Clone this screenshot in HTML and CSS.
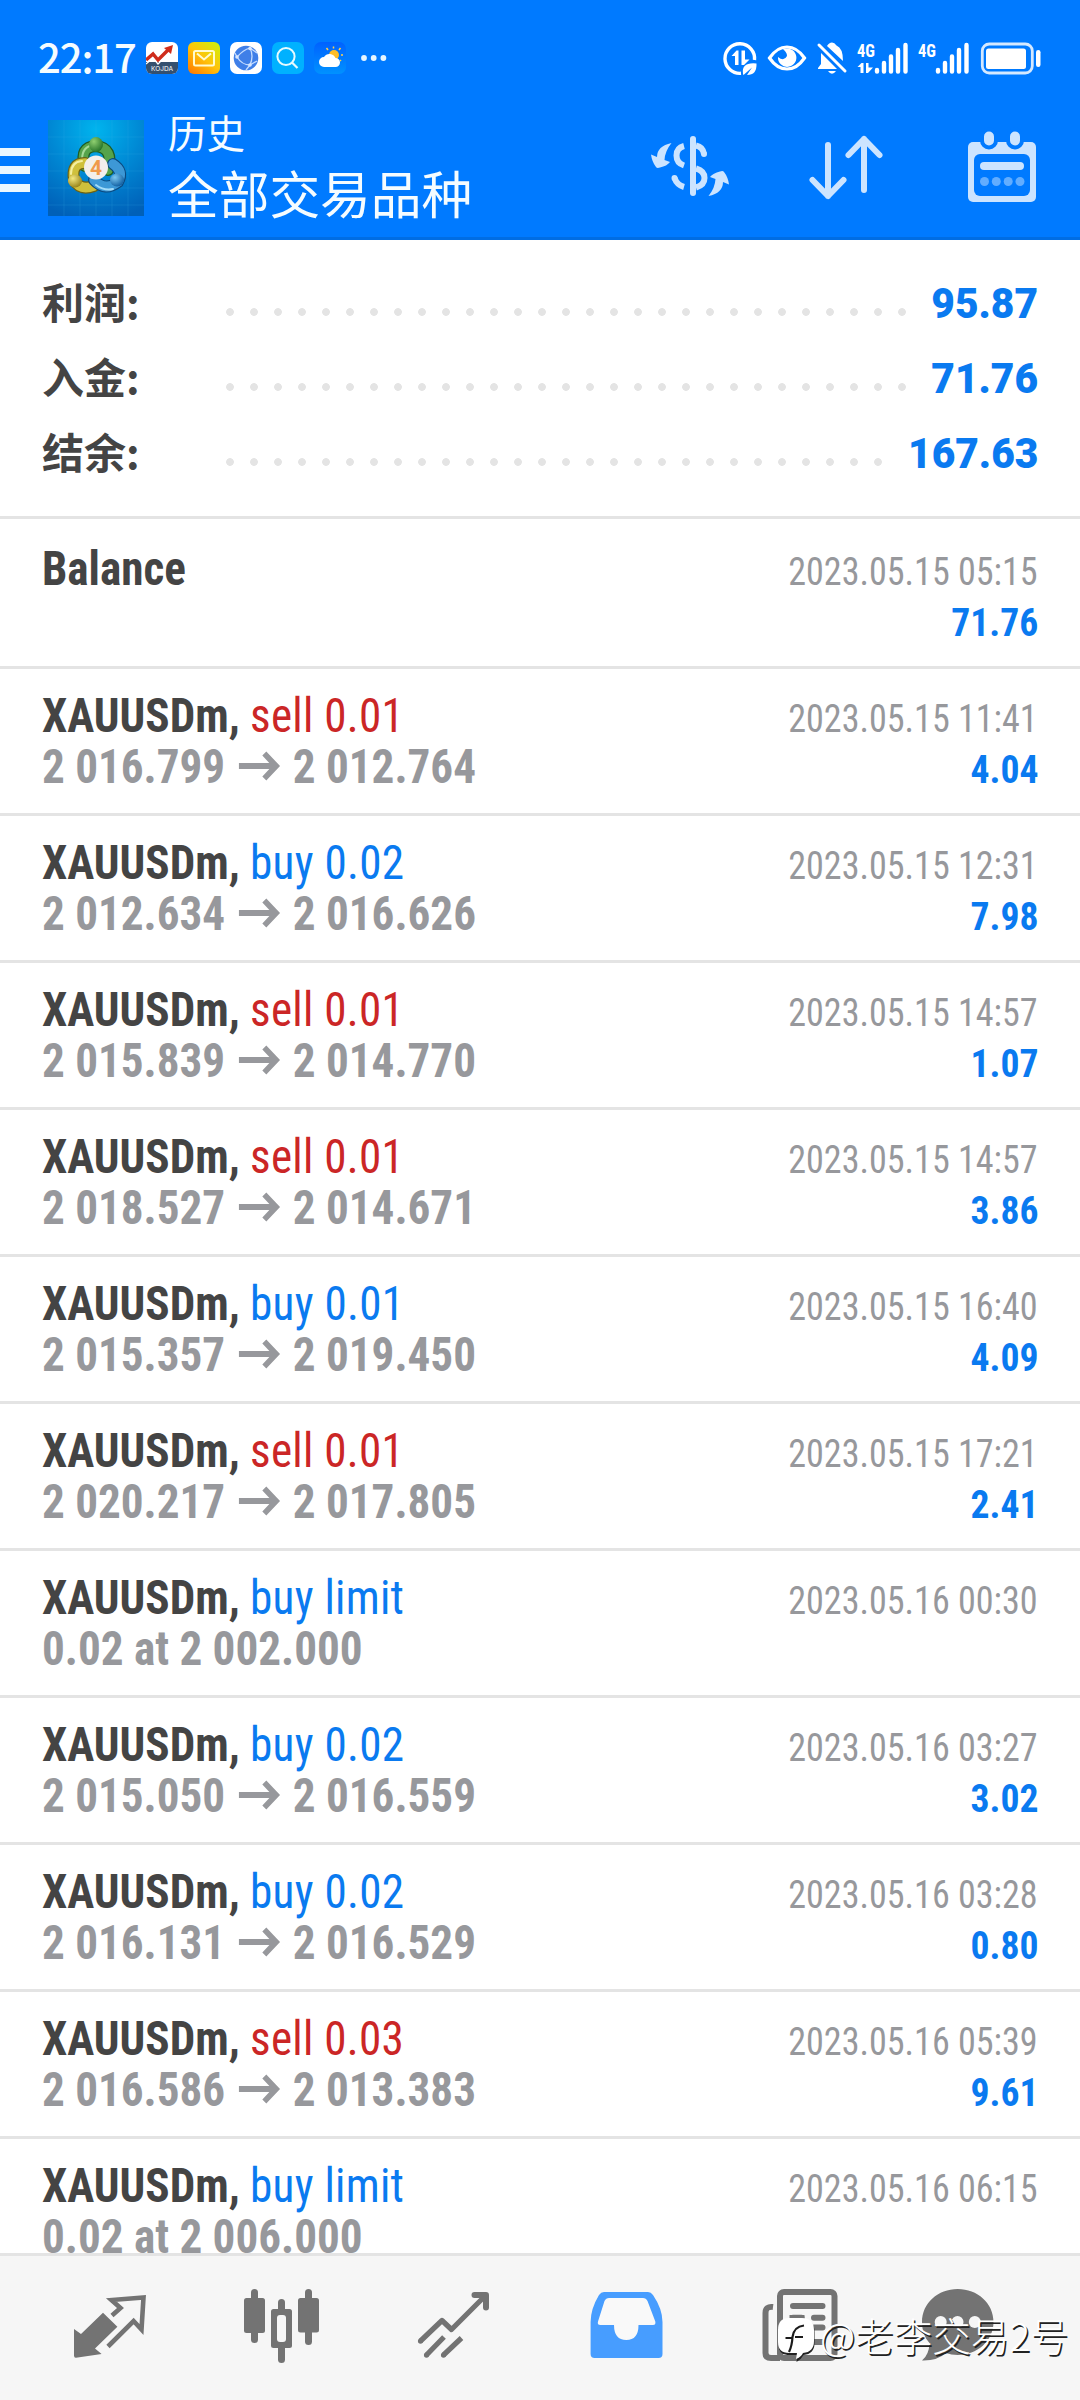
FILE: index.html
```
<!DOCTYPE html>
<html lang="zh-CN">
<head>
<meta charset="utf-8">
<title>历史</title>
<link rel="stylesheet" href="styles.css">
</head>
<body>
<div class="screen">
  <header class="header">
    <div class="status">
      <span class="clock">22:17</span>
      <div class="apps">
        <svg width="32" height="32" viewBox="0 0 32 32"><rect width="32" height="32" rx="6" fill="#fff"/><path d="M0 20H32V26a6 6 0 0 1-6 6H6a6 6 0 0 1-6-6Z" fill="#34506f"/><path d="M0 18L7 12L12 18L23 7" fill="none" stroke="#cf2c1b" stroke-width="3.5"/><path d="M18 6L27 3L25 12Z" fill="#cf2c1b"/><path d="M0 22L7 16L12 22L17 17" fill="none" stroke="#fff" stroke-width="1.2"/><text x="16" y="29" text-anchor="middle" font-size="6.5" fill="#fff" font-family="Inter">KOJDA</text></svg>
        <svg width="32" height="32" viewBox="0 0 32 32"><defs><linearGradient id="mail" x1="0.1" y1="1" x2="0.9" y2="0"><stop offset="0" stop-color="#ff7a00"/><stop offset=".5" stop-color="#ffc40a"/><stop offset="1" stop-color="#cdf00c"/></linearGradient></defs><rect width="32" height="32" rx="6" fill="url(#mail)"/><rect x="6" y="9" width="20" height="14.5" rx="1.5" fill="none" stroke="#fffbd0" stroke-width="2"/><path d="M9 11.5L16 17.5L23 11.5" fill="none" stroke="#fffbd0" stroke-width="2"/></svg>
        <svg width="32" height="32" viewBox="0 0 32 32"><rect width="32" height="32" rx="7" fill="#fff"/><circle cx="16" cy="16" r="12.3" fill="#3f7fe8"/><path d="M7 15Q13 8 20 6Q24 14 20 23Q12 23 7 15M20 6L27 11M20 23L27 19M7 15L5 11M20 23L16 28" fill="none" stroke="#c5dcff" stroke-width="1.3"/><circle cx="7" cy="15" r="1.8" fill="#d8e7ff"/><circle cx="20" cy="6.5" r="1.8" fill="#d8e7ff"/><circle cx="20" cy="23" r="1.8" fill="#d8e7ff"/></svg>
        <svg width="32" height="32" viewBox="0 0 32 32"><rect width="32" height="32" rx="7" fill="#00b1ff"/><circle cx="14" cy="14.5" r="8.6" fill="none" stroke="#e6faff" stroke-width="2"/><path d="M20 20.5L25.5 26" stroke="#e6faff" stroke-width="2.2"/></svg>
        <svg width="32" height="32" viewBox="0 0 32 32"><defs><linearGradient id="sky" x1="0" y1="0" x2="0" y2="1"><stop offset="0" stop-color="#0062ff"/><stop offset="1" stop-color="#0092ff"/></linearGradient></defs><rect width="32" height="32" rx="7" fill="url(#sky)"/><circle cx="20" cy="13" r="5" fill="#ffbd28"/><path d="M14 8L12.500 6M19.500 6.500V4.500M25 8L26.500 6M27 13H29M26 18L27 19" stroke="#ffcf4c" stroke-width="1.5"/><path d="M10 25a5 5 0 0 1 0-10a6.500 6.500 0 0 1 11.500 1a4.500 4.500 0 0 1 0 9Z" fill="#fff"/></svg>
        <svg class="more" width="26" height="32" viewBox="0 0 26 32" fill="#e6f6ff"><circle cx="3" cy="16" r="2.900"/><circle cx="12.700" cy="16" r="2.900"/><circle cx="22.400" cy="16" r="2.900"/></svg>
      </div>
      <svg class="indicators" width="330" height="40" viewBox="720 38 330 40" fill="#fff">
        <path d="M741 73.300A14.800 14.800 0 1 1 754.500 60" fill="none" stroke="#fff" stroke-width="3.400"/>
        <path d="M731.500 56L736.500 50.500H738.500V65H735V56ZM741.500 50.500H745V59.500H749.500L744 65H741.500Z"/>
        <path d="M743 74Q741 62 756.500 63.500Q757 75 747 75L752 67.500L743.500 75Z"/>
        <path d="M769.500 58Q777 47 787 47T804.500 58Q797 69 787 69T769.500 58Z" fill="none" stroke="#fff" stroke-width="3.200"/>
        <path d="M783 49.500A9.200 9.200 0 1 1 778 57Q784 62 787 56Q787 52 783 49.500Z"/>
        <path d="M821 53V64L818 68V69H837ZM827 46Q829 42.500 832 42.500Q834.500 42.500 836.500 45.500Q843 48 843 61ZM828 71H836Q832 76.500 828 71Z"/>
        <path d="M819 45L845 71" stroke="#fff" stroke-width="3" stroke-linecap="round"/>
        <text class="net" x="857" y="56.500" textLength="18" lengthAdjust="spacingAndGlyphs">4G</text>
        <text class="net" x="918" y="56.500" textLength="18" lengthAdjust="spacingAndGlyphs">4G</text>
        <path d="M857.500 67L861.500 63H863.500V73H860.500V67ZM866 63H868.500V67.500H873L868 73H866Z"/>
        <path d="M877 70V71.500M884 63V71.500M891 56.500V71.500M898 50V71.500M905.500 45V71.500M938 70V71.500M945 63V71.500M952 56.500V71.500M959 50V71.500M966.500 45V71.500" stroke="#fff" stroke-width="4.400" stroke-linecap="round"/>
        <rect x="982.300" y="44" width="50" height="29" rx="7" fill="none" stroke="#d5e9ff" stroke-width="2.800"/><rect x="986" y="48.500" width="40" height="20.500" rx="2.500"/><rect x="1036" y="50" width="4.500" height="17" rx="2.200"/>
      </svg>
    </div>
    <div class="toolbar">
      <svg class="menu" width="30" height="96" viewBox="0 0 30 96" fill="#ebf7ff"><path d="M0 28H30V36H0ZM0 46H30V54H0ZM0 64H30V72H0Z"/></svg>
      <svg class="logo" width="96" height="96" viewBox="0 0 96 96">
        <defs>
          <radialGradient id="lg" cx=".5" cy=".1" r=".95"><stop offset="0" stop-color="#00b4ee"/><stop offset=".5" stop-color="#0088d4"/><stop offset="1" stop-color="#0060b8"/></radialGradient>
          <radialGradient id="gy" cx=".35" cy=".3" r=".8"><stop offset="0" stop-color="#f3e880"/><stop offset="1" stop-color="#8f7a10"/></radialGradient>
          <radialGradient id="gg" cx=".35" cy=".3" r=".8"><stop offset="0" stop-color="#8fcf70"/><stop offset="1" stop-color="#1b6a22"/></radialGradient>
          <radialGradient id="gb" cx=".35" cy=".3" r=".8"><stop offset="0" stop-color="#7cc8f2"/><stop offset="1" stop-color="#07559a"/></radialGradient>
        </defs>
        <rect width="96" height="96" fill="url(#lg)"/>
        <path d="M16 0V96M32 0V96M48 0V96M64 0V96M80 0V96M0 17H96M0 34H96M0 51H96M0 68H96M0 85H96" stroke="#3fb4ec" stroke-opacity=".18"/>
        <g fill="none" stroke-linecap="round">
          <path d="M37 46Q31 27 48 26Q66 28 60 50" stroke="#1f5c24" stroke-width="12"/><path d="M37 46Q31 27 48 26Q66 28 60 50" stroke="#55a34b" stroke-width="9.500"/><path d="M34 40Q34 26 46 25" stroke="#a5d998" stroke-width="2"/>
          <path d="M37 43Q23 43 26 60Q32 71 46 66" stroke="#6d6213" stroke-width="12"/><path d="M37 43Q23 43 26 60Q32 71 46 66" stroke="#cfc03c" stroke-width="9.500"/><path d="M23 54Q23 42 34 41" stroke="#f5efa0" stroke-width="2"/>
          <path d="M65 44Q76 51 70 62Q57 72 46 60" stroke="#0b4a80" stroke-width="12"/><path d="M65 44Q76 51 70 62Q57 72 46 60" stroke="#3d98d6" stroke-width="9.500"/><path d="M48 65Q56 71 65 69" stroke="#a5dcf8" stroke-width="2"/>
        </g>
        <ellipse cx="48" cy="24.500" rx="7" ry="7.500" fill="url(#gg)"/><ellipse cx="27" cy="61" rx="7" ry="6.500" fill="url(#gy)"/><ellipse cx="69" cy="60" rx="7" ry="6.500" fill="url(#gb)"/>
        <circle cx="48" cy="47.500" r="12" fill="#f3efec"/>
        <text x="48" y="55" text-anchor="middle" font-size="21" font-weight="700" font-family="Roboto" fill="#f09a4c">4</text>
      </svg>
      <div class="titles"><div class="section">历史</div><div class="symbols">全部交易品种</div></div>
      <div class="actions">
        <svg width="96" height="96" viewBox="642 120 96 96" fill="none" stroke="#cce4ff" stroke-width="6">
          <path d="M693 139V193" stroke-linecap="round"/>
          <path d="M684 146Q676.500 148 676.500 155.500T684 165.500M674.500 178Q677 185 684 187"/>
          <path d="M674.500 178V178.100M704 154V154.100" stroke-linecap="round"/>
          <path d="M696 145.500Q703 147 704 154M696 168.500Q704.500 171 704.500 178Q704.500 185 696 187.500"/>
          <g fill="#cce4ff" stroke="none"><path id="turn" d="M671.500 143Q657 146 657 157L651 154.500Q652 162 656 167Q657 168.500 660 167.500Q667 166 670 162L664.500 160Q665 151 671.500 143Z"/><use href="#turn" transform="rotate(180 690 169.500)"/></g>
        </svg>
        <svg width="96" height="96" viewBox="798 120 96 96" fill="none" stroke="#cce4ff" stroke-width="6" stroke-linecap="round" stroke-linejoin="round"><path d="M828 145V196M812.500 180L828 196L843.500 180M864 190V139M848.500 155L864 139L879.500 155"/></svg>
        <svg width="96" height="96" viewBox="954 120 96 96" fill="#cce4ff"><rect x="968" y="142" width="68" height="60" rx="5"/><rect x="974" y="154" width="56" height="42" rx="6" fill="#007aff"/><g stroke="#007aff" stroke-width="4"><rect x="982" y="129.500" width="14" height="18" rx="7"/><rect x="1008" y="129.500" width="14" height="18" rx="7"/></g><rect x="980" y="162" width="44" height="8" rx="4"/><g fill="#62adff"><circle cx="984.500" cy="181.500" r="4.500"/><circle cx="996.300" cy="181.500" r="4.500"/><circle cx="1008.200" cy="181.500" r="4.500"/><circle cx="1020" cy="181.500" r="4.500"/></g></svg>
      </div>
    </div>
  </header>

  <section class="summary">
    <div class="sum"><span class="label">利润:</span><i class="dots"></i><b>95.87</b></div>
    <div class="sum"><span class="label">入金:</span><i class="dots"></i><b>71.76</b></div>
    <div class="sum"><span class="label">结余:</span><i class="dots"></i><b>167.63</b></div>
  </section>

  <svg class="defs" width="0" height="0"><symbol id="arrow" viewBox="0 0 44 34"><path d="M0 19H39M27 6.500L39.500 19L27 31.500" fill="none" stroke="#97989c" stroke-width="6"/></symbol></svg>

  <main class="list">
    <div class="row first"><div class="line"><span class="name">Balance</span><time>2023.05.15 05:15</time></div><div class="line"><span class="price">&nbsp;</span><span class="profit">71.76</span></div></div>
    <div class="row"><div class="line"><span class="name">XAUUSDm, <em class="sell">sell 0.01</em></span><time>2023.05.15 11:41</time></div><div class="line"><span class="price">2 016.799<svg class="to"><use href="#arrow"/></svg>2 012.764</span><span class="profit">4.04</span></div></div>
    <div class="row"><div class="line"><span class="name">XAUUSDm, <em class="buy">buy 0.02</em></span><time>2023.05.15 12:31</time></div><div class="line"><span class="price">2 012.634<svg class="to"><use href="#arrow"/></svg>2 016.626</span><span class="profit">7.98</span></div></div>
    <div class="row"><div class="line"><span class="name">XAUUSDm, <em class="sell">sell 0.01</em></span><time>2023.05.15 14:57</time></div><div class="line"><span class="price">2 015.839<svg class="to"><use href="#arrow"/></svg>2 014.770</span><span class="profit">1.07</span></div></div>
    <div class="row"><div class="line"><span class="name">XAUUSDm, <em class="sell">sell 0.01</em></span><time>2023.05.15 14:57</time></div><div class="line"><span class="price">2 018.527<svg class="to"><use href="#arrow"/></svg>2 014.671</span><span class="profit">3.86</span></div></div>
    <div class="row"><div class="line"><span class="name">XAUUSDm, <em class="buy">buy 0.01</em></span><time>2023.05.15 16:40</time></div><div class="line"><span class="price">2 015.357<svg class="to"><use href="#arrow"/></svg>2 019.450</span><span class="profit">4.09</span></div></div>
    <div class="row"><div class="line"><span class="name">XAUUSDm, <em class="sell">sell 0.01</em></span><time>2023.05.15 17:21</time></div><div class="line"><span class="price">2 020.217<svg class="to"><use href="#arrow"/></svg>2 017.805</span><span class="profit">2.41</span></div></div>
    <div class="row"><div class="line"><span class="name">XAUUSDm, <em class="buy">buy limit</em></span><time>2023.05.16 00:30</time></div><div class="line"><span class="price">0.02 at 2 002.000</span></div></div>
    <div class="row"><div class="line"><span class="name">XAUUSDm, <em class="buy">buy 0.02</em></span><time>2023.05.16 03:27</time></div><div class="line"><span class="price">2 015.050<svg class="to"><use href="#arrow"/></svg>2 016.559</span><span class="profit">3.02</span></div></div>
    <div class="row"><div class="line"><span class="name">XAUUSDm, <em class="buy">buy 0.02</em></span><time>2023.05.16 03:28</time></div><div class="line"><span class="price">2 016.131<svg class="to"><use href="#arrow"/></svg>2 016.529</span><span class="profit">0.80</span></div></div>
    <div class="row"><div class="line"><span class="name">XAUUSDm, <em class="sell">sell 0.03</em></span><time>2023.05.16 05:39</time></div><div class="line"><span class="price">2 016.586<svg class="to"><use href="#arrow"/></svg>2 013.383</span><span class="profit">9.61</span></div></div>
    <div class="row"><div class="line"><span class="name">XAUUSDm, <em class="buy">buy limit</em></span><time>2023.05.16 06:15</time></div><div class="line"><span class="price">0.02 at 2 006.000</span></div></div>
  </main>

  <nav class="tabs">
    <svg viewBox="62 2280 96 96" fill="#737373"><path d="M103 2312.700L117.400 2326.700L95 2348.500L101.600 2354L76 2357.800Q74 2358 74 2355.500V2329L81 2334Z"/><path d="M112 2315.500L120.500 2308L111.500 2300L143.500 2297.500L141.500 2329.500L133.600 2321L108 2346.500" fill="none" stroke="#737373" stroke-width="4.600"/></svg>
    <svg viewBox="234 2280 96 96" fill="#737373"><rect x="244" y="2298" width="21" height="35" rx="2.500"/><rect x="251" y="2289" width="7" height="54" rx="3.500"/><rect x="298" y="2298" width="21" height="34.500" rx="2.500"/><rect x="305" y="2289" width="7" height="56" rx="3.500"/><rect x="278" y="2299" width="7" height="64" rx="3.500"/><rect x="271" y="2309" width="21" height="39" rx="2.500"/><rect x="277" y="2315" width="9" height="27" rx="3" fill="#f6f6f6"/></svg>
    <svg viewBox="406 2280 96 96" fill="none" stroke="#737373" stroke-width="5.200"><path d="M420.500 2341L442 2320.500L451.500 2329.500L485 2296" stroke-linejoin="round"/><path d="M474.500 2295H486V2307.500" stroke-width="6" stroke-linecap="round" stroke-linejoin="round"/><path d="M444 2337L426.500 2355M461.500 2338L443.500 2355"/><path d="M420.500 2341V2341.100M426.500 2355V2355.100M443.500 2355V2355.100" stroke-linecap="round"/></svg>
    <svg viewBox="578 2280 96 96"><path d="M604 2292H648Q651 2292 653 2295Q662.500 2309 662.500 2322V2354Q662.500 2358 658.500 2358H594.600Q590.600 2358 590.600 2354V2322Q590.600 2309 599 2295Q601 2292 604 2292Z" fill="#479dff"/><path d="M609 2298H643Q646 2298 647.500 2301L655.300 2321.500Q656 2325 653 2325H638.500Q638.500 2340 626.300 2340T614 2325H600.500Q597 2325 598 2321.500L604.500 2301Q606 2298 609 2298Z" fill="#f9f9f9"/></svg>
    <svg viewBox="750 2280 96 96" fill="none" stroke="#737373" stroke-width="6"><path d="M773 2307Q765.500 2306 765.500 2313V2353Q765.500 2358 771 2358H780"/><rect x="780" y="2292" width="54.500" height="66" rx="4"/><path d="M793 2306H822.500M793 2317.700H801.500M814 2317.700H822.500M814 2327.500H822.500M793 2342H822.500" stroke-linecap="round"/><rect x="792.500" y="2318" width="9" height="10"/></svg>
    <svg viewBox="922 2280 96 96" fill="#737373"><path d="M922 2322C922 2303 938 2289 957.700 2289S993.500 2303 993.500 2322S977 2355 957.700 2355Q951 2355 946 2353Q937 2361 922 2360.500Q929 2355 929.500 2343Q922 2335 922 2322Z"/><g fill="#f6f6f6"><circle cx="940.700" cy="2322" r="6"/><circle cx="957.500" cy="2322" r="6"/><circle cx="974.800" cy="2322" r="6"/></g></svg>
  </nav>
  <div class="watermark">
    <svg width="40" height="46" viewBox="0 0 40 46"><path d="M10 1H26Q37 1 37 13V24Q37 35 26 36Q24 40 19 43L20 36H10Q1 36 1 25V12Q1 1 10 1Z" fill="#222" transform="translate(.5 1)"/><path d="M12 0H25Q37 0 37 12V23Q37 34 26 35Q24 39 19 41L20 35H12Q1 35 1 24V12Q1 0 12 0Z" fill="#fff"/><path d="M12 34Q15 28 15.500 19Q17 8.500 27 7.500M8.500 20H15M18 19H26" fill="none" stroke="#1b1b1b" stroke-width="2.200"/></svg>
    <span>@老李交易2号</span>
  </div>
</div>
</body>
</html>
```
FILE: styles.css
```
* { box-sizing: border-box; }
body { margin: 0; background: #fff; }
svg { display: block; flex: none; }
.screen {
  position: relative;
  display: flex;
  flex-direction: column;
  width: 1080px;
  height: 2400px;
  overflow: hidden;
  font-family: Roboto, "Noto Sans CJK SC", sans-serif;
}
.header {
  flex: none;
  height: 240px;
  background: #007aff;
  border-bottom: 3px solid #006de3;
  color: #f5fcff;
}
.status {
  display: flex;
  align-items: center;
  height: 116px;
  padding: 0 30px 0 38px;
}
.clock {
  width: 108px;
  padding-bottom: 3px;
  font: 500 40px/57px "Noto Sans CJK SC", sans-serif;
  letter-spacing: -1.1px;
}
.apps { display: flex; gap: 10px; }
.more { margin-left: 5px; }
.indicators { margin-left: auto; }
.net { font: 700 19px "Roboto Condensed", Roboto, sans-serif; }
.toolbar {
  display: flex;
  align-items: center;
  height: 104px;
  padding-right: 30px;
}
.logo { margin-left: 18px; }
.titles { margin-left: 24px; }
.section { padding-top: 2px; font-size: 38.5px; line-height: 54px; }
.symbols { padding-top: 2px; font-size: 50.7px; line-height: 66px; }
.actions { display: flex; gap: 60px; margin-left: auto; }

.summary {
  flex: none;
  height: 279px;
  padding: 26px 42px 0 42px;
  border-bottom: 3px solid #e4e4e4;
}
.sum {
  display: flex;
  align-items: center;
  height: 75px;
  font-size: 42px;
  font-weight: 700;
  color: #444;
}
.label { width: 176px; padding-bottom: 6px; font-family: "Noto Sans CJK SC", sans-serif; line-height: 62px; }
.dots {
  flex: 1;
  height: 8px;
  margin: 16px 15px 0 0;
  background: radial-gradient(circle at 12px 4px, #e4e4e4 3.5px, transparent 4.2px) 0 0 / 24px 8px repeat-x;
}
.sum b { color: #0a7af0; transform: scaleX(0.97); transform-origin: right; }

.defs { position: absolute; }
.list {
  flex: 1;
  min-height: 0;
  overflow: hidden;
  font-family: "Roboto Condensed", Roboto, sans-serif;
}
.row {
  height: 147px;
  padding: 21px 42px 0;
  border-bottom: 3px solid #e4e4e4;
}
.row.first { height: 150px; padding-top: 24px; }
.line {
  display: flex;
  justify-content: space-between;
  align-items: baseline;
  height: 51px;
  line-height: 51px;
  white-space: pre;
}
.name, .price {
  font-size: 48px;
  font-weight: 700;
  color: #444;
  transform: scaleX(0.94);
  transform-origin: left;
}
.price { color: #97989c; }
.name em { font-style: normal; font-weight: 430; letter-spacing: 0.3px; }
.sell { color: #cb2626; }
.buy { color: #0a7af0; }
.to {
  display: inline-block;
  width: 47px;
  height: 34px;
  margin: 0 12px 0 13px;
  vertical-align: 2px;
}
time, .profit {
  margin-left: auto;
  font-size: 39px;
  font-weight: 430;
  color: #97989c;
  transform: scaleX(0.925);
  transform-origin: right;
}
.profit { font-weight: 700; color: #0a7af0; transform: scaleX(0.965); }

.tabs {
  flex: none;
  display: flex;
  gap: 76px;
  height: 147px;
  padding: 24px 62px 0;
  background: #f6f6f6;
  border-top: 3px solid #e4e4e4;
}
.tabs svg { width: 96px; height: 96px; }
.watermark {
  position: absolute;
  left: 777px;
  top: 2308px;
  display: flex;
  align-items: center;
  gap: 3px;
  font: 300 38.6px/56px "Noto Sans CJK SC", sans-serif;
  color: #fff;
  text-shadow: 1.5px 1.5px 0 #222;
  white-space: nowrap;
}
.watermark svg { margin-top: 10px; }
.watermark span { margin-top: -4px; }
```
